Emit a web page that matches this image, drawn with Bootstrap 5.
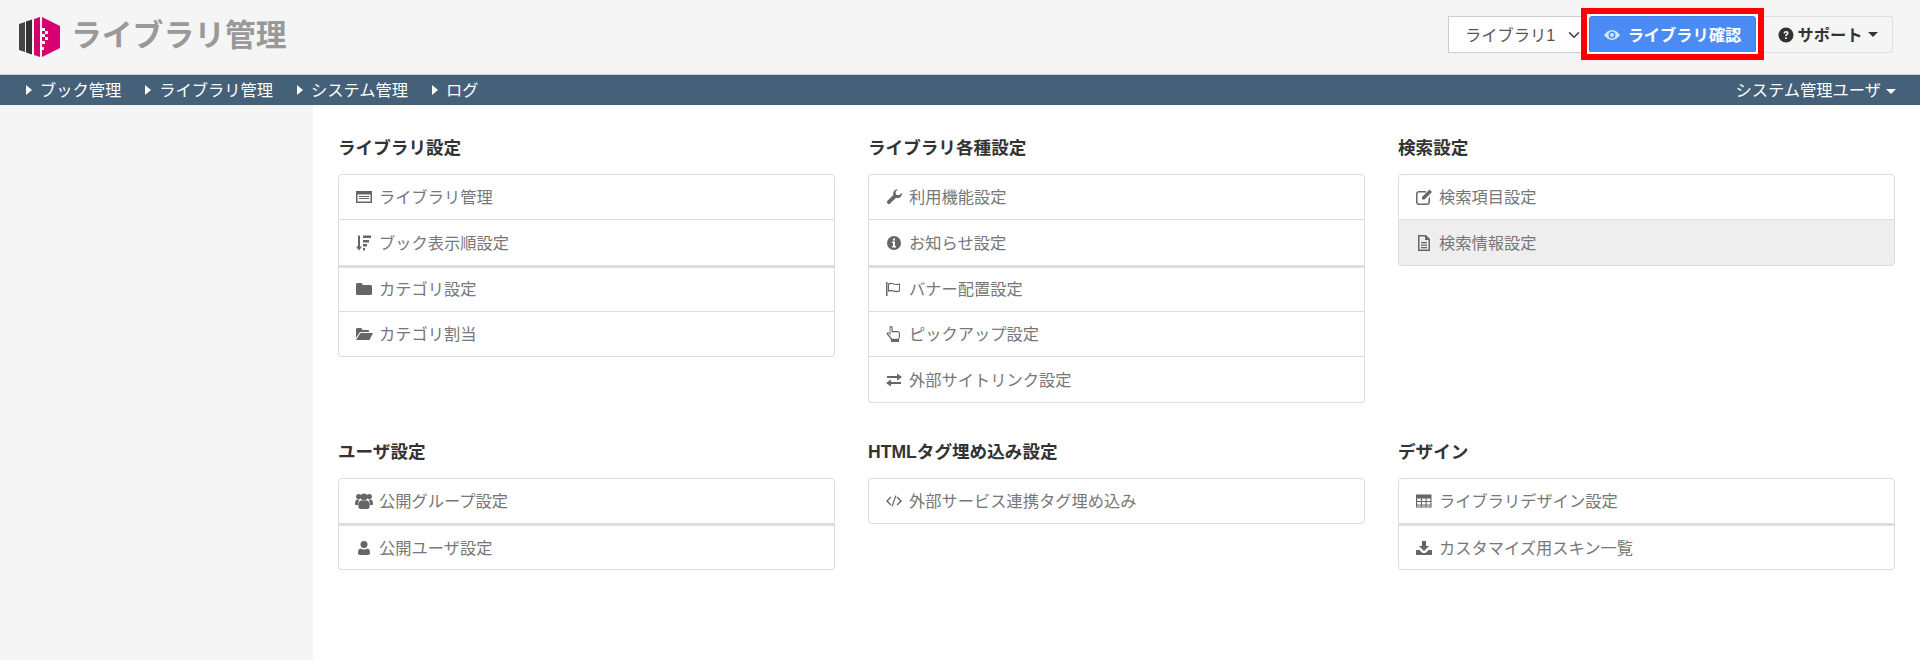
<!DOCTYPE html>
<html lang="ja"><head><meta charset="utf-8"><title>ライブラリ管理</title>
<link href="https://cdn.jsdelivr.net/npm/bootstrap@5.3.0/dist/css/bootstrap.min.css" rel="stylesheet">
<style>
body{font-family:"Liberation Sans","Noto Sans CJK JP",sans-serif;font-size:16.25px;background:#fff;color:#333;line-height:24px}
.top-bar{height:75px;background:#f5f5f5;border-bottom:1px solid #ccc;padding:0 27px 5px 19px}
.brand-wrap{margin-top:5px}
.logo-title{font-size:30.8px;font-weight:700;color:#999;margin-left:11px;line-height:40px;position:relative;top:-1px}
.lib-select{width:141px;height:37px;border-radius:0;font-size:16.25px;line-height:24px;padding:5px 30px 5px 16px;color:#555;border-color:#ccc;background-position:right 6px center;flex:none}
.view-btn{width:167px;height:37px;background:#4a8bf5;border:1px solid #3f7fe6;color:#fff;font-weight:700;font-size:16.25px;line-height:24px;padding:0;border-radius:3px;position:relative;z-index:2}
.view-btn:hover{background:#4a8bf5;color:#fff}
.view-btn::after{content:"";position:absolute;inset:-9px -9px -8px;border:6px solid #f00;box-shadow:inset 0 0 0 2px #fff;pointer-events:none}
.support-btn{width:131px;height:37px;margin-left:6px;background:#f5f5f5;border:1px solid #ddd;color:#333;font-weight:700;font-size:16.25px;line-height:24px;padding:0;border-radius:3px}
.main-nav{height:30px;background:#456179;color:#fff;padding:0 24px 0 26px;line-height:30px}
.nav-entry{color:#fff;text-decoration:none;margin-right:24px}
.nav-entry:hover{color:#fff}
.tri{width:0;height:0;border-left:6px solid #fff;border-top:5px solid transparent;border-bottom:5px solid transparent;margin-right:8px}
.cdown{display:inline-block;width:0;height:0;border-top:5px solid currentColor;border-left:5px solid transparent;border-right:5px solid transparent;vertical-align:middle;margin-left:5px}
.side-pane{width:313px;background:#f5f5f5;flex:none;min-height:555px}
.body-pane{padding:30px 25px 0}
.body-pane .row{--bs-gutter-x:33px;--bs-gutter-y:0}
.group-title{font-size:17.6px;font-weight:700;color:#333;line-height:24px;margin:1px 0 14px}
.group-block{min-height:304px}
.group-block.low{min-height:0}
.list-group{--bs-list-group-border-color:#ddd;--bs-list-group-border-radius:4px}
.list-group-item{height:45.7px;padding:0 16px;color:#777;font-size:16.25px;display:flex;align-items:center}
.list-group-item:first-child{height:46.4px}
.list-group-item:hover{color:#777}
.list-group-item.sel{background:#eee}
.list-group-item.thick{border-top:2px solid #ddd}
.gi{width:18px;height:18px;fill:#666;margin-right:6px;flex:none}
.bi-w{width:16px;height:16px;flex:none}
</style></head><body>
<header class="top-bar d-flex align-items-center justify-content-between">
 <div class="d-flex align-items-center brand-wrap">
  <svg width="41" height="40" viewBox="0 0 41 40"><path d="M0 7l6-2v30l-6-2z" fill="#444"/><path d="M7 4.500l6-2v35l-6-2z" fill="#333"/><path d="M15 2l6-2v40l-6-2z" fill="#d6006e"/><path d="M23 0l18 9v22l-18 9v-7h2v-3h-2v-3h3v-3h-3v-4h3v-3h-3v-3h3v-3h-3z" fill="#d6006e"/><path d="M26 14h3v3h-3zM26 20h3v3h-3z" fill="#fff"/></svg>
  <span class="logo-title">ライブラリ管理</span>
 </div>
 <div class="d-flex align-items-center">
  <select class="form-select lib-select"><option>ライブラリ1</option></select>
  <button class="btn view-btn d-flex align-items-center justify-content-center" type="button">
   <svg class="bi-w me-2" viewBox="0 0 16 16"><path fill="#d8e6fb" fill-rule="evenodd" d="M8 3C4.500 3 2 5.500 0 8c2 2.500 4.500 5 8 5s6-2.500 8-5c-2-2.500-4.500-5-8-5zm0 1.500a3.500 3.500 0 1 1 0 7 3.500 3.500 0 0 1 0-7zM8 6a2 2 0 1 0 0 4 2 2 0 0 0 0-4z"/></svg>ライブラリ確認</button>
  <button class="btn support-btn d-flex align-items-center justify-content-center" type="button">
   <svg class="bi-w me-1" viewBox="0 0 16 16"><circle cx="8" cy="8" r="7.500" fill="#333"/><path d="M5.500 6.300C5.700 4.800 6.700 4 8.100 4c1.500 0 2.500.9 2.500 2.100 0 1.100-.7 1.600-1.300 2-.5.300-.6.500-.6 1H7.100c0-1 .3-1.500 1-2 .5-.3.8-.5.8-.9 0-.4-.3-.7-.8-.7-.6 0-.9.300-1 .9zM7.100 10.200h1.700V12H7.100z" fill="#f5f5f5"/></svg>サポート<span class="cdown"></span></button>
 </div>
</header>
<nav class="main-nav d-flex align-items-center justify-content-between">
 <div class="d-flex">
  <a class="nav-entry d-flex align-items-center" href="#"><span class="tri"></span>ブック管理</a>
  <a class="nav-entry d-flex align-items-center" href="#"><span class="tri"></span>ライブラリ管理</a>
  <a class="nav-entry d-flex align-items-center" href="#"><span class="tri"></span>システム管理</a>
  <a class="nav-entry d-flex align-items-center" href="#"><span class="tri"></span>ログ</a>
 </div>
 <div>システム管理ユーザ<span class="cdown"></span></div>
</nav>
<div class="d-flex">
 <aside class="side-pane"></aside>
 <main class="body-pane flex-grow-1">
  <div class="row">
   <div class="col-4 group-block">
    <h2 class="group-title">ライブラリ設定</h2>
    <div class="list-group">
     <a class="list-group-item list-group-item-action" href="#"><svg class="gi" viewBox="0 0 18 18"><path fill-rule="evenodd" d="M1 3h16v12H1zM2.500 6.500v7h13v-7zM4 8h10v1H4zM4 10h10v1H4z"/></svg>ライブラリ管理</a>
     <a class="list-group-item list-group-item-action" href="#"><svg class="gi" viewBox="0 0 18 18"><path d="M3 1.500h2v11h2l-3 4-3-4h2zM8 1.500h8v2.500H8zM8 6h6v2.500H8zM8 10h4v2.500H8zM8 14h2v2.500H8z"/></svg>ブック表示順設定</a>
     <a class="list-group-item list-group-item-action thick" href="#"><svg class="gi" viewBox="0 0 18 18"><path d="M1 4.500C1 3.700 1.700 3 2.500 3h4l1.500 2h7.500c.8 0 1.500.7 1.500 1.500v7c0 .8-.7 1.500-1.500 1.500h-13C1.700 15 1 14.300 1 13.500z"/></svg>カテゴリ設定</a>
     <a class="list-group-item list-group-item-action" href="#"><svg class="gi" viewBox="0 0 18 18"><path d="M1 13V4.500C1 3.700 1.600 3 2.400 3h3.800l1.500 2h5.100c.8 0 1.200.5 1.200 1.200V7H5L1 13zM5.500 8H18l-3.500 7H1z"/></svg>カテゴリ割当</a>
    </div>
   </div>
   <div class="col-4 group-block">
    <h2 class="group-title">ライブラリ各種設定</h2>
    <div class="list-group">
     <a class="list-group-item list-group-item-action" href="#"><svg class="gi" viewBox="0 0 18 18"><path d="M17 5.500a4.500 4.500 0 0 1-6 4.200L5.200 15.500a1.900 1.900 0 0 1-2.700-2.700L8.300 7A4.500 4.500 0 0 1 13 1.200L10.500 3.800l.5 3 3 .5L16.500 5z"/></svg>利用機能設定</a>
     <a class="list-group-item list-group-item-action" href="#"><svg class="gi" viewBox="0 0 18 18"><path fill-rule="evenodd" d="M9 2a7 7 0 1 0 0 14A7 7 0 0 0 9 2zM8 4.500h2v2H8zM7 7.500h3v4.500h1v1.500H7V12h1V9H7z"/></svg>お知らせ設定</a>
     <a class="list-group-item list-group-item-action thick" href="#"><svg class="gi" viewBox="0 0 18 18"><path fill-rule="evenodd" d="M1 2h1.500v14H1zM3 3.500c2-1 4-.8 6 0s3.500.6 6-.3v8.300c-2.500 1-4 1-6 .3s-4-.8-6 0zM4 4.500v5.700c1.800-.5 3.500-.2 5.300.4 1.700.6 3 .6 4.700 0V4.700c-1.900.6-3.300.4-5.300-.3-1.600-.6-3.200-.5-4.700.1z"/></svg>バナー配置設定</a>
     <a class="list-group-item list-group-item-action" href="#"><svg class="gi" viewBox="0 0 18 18"><path fill-rule="evenodd" d="M6 1c1 0 1.700.8 1.700 1.700V6h4.800c1.400 0 2.500 1 2.500 2.500V12l-1 2.500V17H6v-2.500L2 9.500c-.8-1-.2-2.200.9-2.300.7 0 1.300.3 1.700.8V2.700C4.300 1.800 5 1 6 1zm0 1.200c-.3 0-.5.3-.5.5v7.500L4 8.500c-.4-.3-1-.1-.8.4l4 4.800h6l.7-1.900V8.500c0-.7-.5-1.200-1.300-1.200H6.500V2.700c0-.2-.2-.5-.5-.5z"/></svg>ピックアップ設定</a>
     <a class="list-group-item list-group-item-action" href="#"><svg class="gi" viewBox="0 0 18 18"><path d="M2 5h10V2.500L17 6l-5 3.500V7H2zM16 11H6V8.500L1 12l5 3.500V13h10z"/></svg>外部サイトリンク設定</a>
    </div>
   </div>
   <div class="col-4 group-block">
    <h2 class="group-title">検索設定</h2>
    <div class="list-group">
     <a class="list-group-item list-group-item-action" href="#"><svg class="gi" viewBox="0 0 18 18"><path d="M4 3h7v1.500H4c-.8 0-1.500.7-1.500 1.500v8c0 .8.7 1.500 1.500 1.500h8c.8 0 1.500-.7 1.500-1.500v-3L15 8.500V14c0 1.700-1.300 3-3 3H4c-1.700 0-3-1.300-3-3V6c0-1.700 1.300-3 3-3zM14.500 1.500L17 4l-7.500 7.500H7V9z"/></svg>検索項目設定</a>
     <a class="list-group-item list-group-item-action sel" href="#"><svg class="gi" viewBox="0 0 18 18"><path fill-rule="evenodd" d="M3 1h8l4 4v12H3zM4.500 2.500v13h9V6H10V2.500zM6 8h6v1.200H6zM6 10.500h6v1.200H6zM6 13h6v1.200H6z"/></svg>検索情報設定</a>
    </div>
   </div>
   <div class="col-4 group-block low">
    <h2 class="group-title">ユーザ設定</h2>
    <div class="list-group">
     <a class="list-group-item list-group-item-action" href="#"><svg class="gi" viewBox="0 0 18 18"><circle cx="3.700" cy="4.500" r="2.600"/><circle cx="14.300" cy="4.500" r="2.600"/><circle cx="9" cy="5" r="3.400"/><path d="M0 12c0-2.800.8-4.500 2.500-4.500h2c-1 1.400-1.400 3-1.400 5.500H1c-.6 0-1-.4-1-1zM18 12c0-2.800-.8-4.500-2.500-4.500h-2c1 1.400 1.400 3 1.400 5.500H17c.6 0 1-.4 1-1zM6 8.500h6c1.700 0 2.700 2.300 2.700 5.500 0 1.500-.7 3-2.200 3h-7c-1.500 0-2.200-1.500-2.200-3 0-3.200 1-5.500 2.700-5.500z"/></svg>公開グループ設定</a>
     <a class="list-group-item list-group-item-action thick" href="#"><svg class="gi" viewBox="0 0 18 18"><circle cx="9" cy="5.500" r="3.500"/><path d="M5.500 9.500c1 .8 2.200 1 3.500 1s2.500-.2 3.500-1c1.700.2 2.500 2 2.500 4.500 0 1.300-.8 2-2 2H5c-1.200 0-2-.7-2-2 0-2.500.8-4.300 2.500-4.500z"/></svg>公開ユーザ設定</a>
    </div>
   </div>
   <div class="col-4 group-block low">
    <h2 class="group-title">HTMLタグ埋め込み設定</h2>
    <div class="list-group">
     <a class="list-group-item list-group-item-action" href="#"><svg class="gi" viewBox="0 0 18 18"><path d="M5.500 4.500l.9 1L3 9l3.400 3.500-.9 1L1 9zM12.500 4.500l-.9 1L15 9l-3.400 3.500.9 1L17 9zM10.200 3.500l1.200.3L7.800 14.500l-1.200-.3z"/></svg>外部サービス連携タグ埋め込み</a>
    </div>
   </div>
   <div class="col-4 group-block low">
    <h2 class="group-title">デザイン</h2>
    <div class="list-group">
     <a class="list-group-item list-group-item-action" href="#"><svg class="gi" viewBox="0 0 18 18"><path fill-rule="evenodd" d="M1 2.500h15.500v13H1zM2.200 6.500v2.400h3.700V6.500zM7 6.500v2.400h3.500V6.500zM11.600 6.500v2.400h3.700V6.500zM2.200 10v2.400h3.700V10zM7 10v2.400h3.500V10zM11.600 10v2.400h3.700V10zM2.200 13.500v1h3.700v-1zM7 13.500v1h3.500v-1zM11.600 13.500v1h3.700v-1z"/></svg>ライブラリデザイン設定</a>
     <a class="list-group-item list-group-item-action thick" href="#"><svg class="gi" viewBox="0 0 18 18"><path d="M7 2h4v5h3l-5 5-5-5h3zM1 11h3.500l3 3h3l3-3H17v5H1z"/></svg>カスタマイズ用スキン一覧</a>
    </div>
   </div>
  </div>
 </main>
</div>
<script src="https://cdn.jsdelivr.net/npm/bootstrap@5.3.0/dist/js/bootstrap.bundle.min.js"></script>
</body></html>
